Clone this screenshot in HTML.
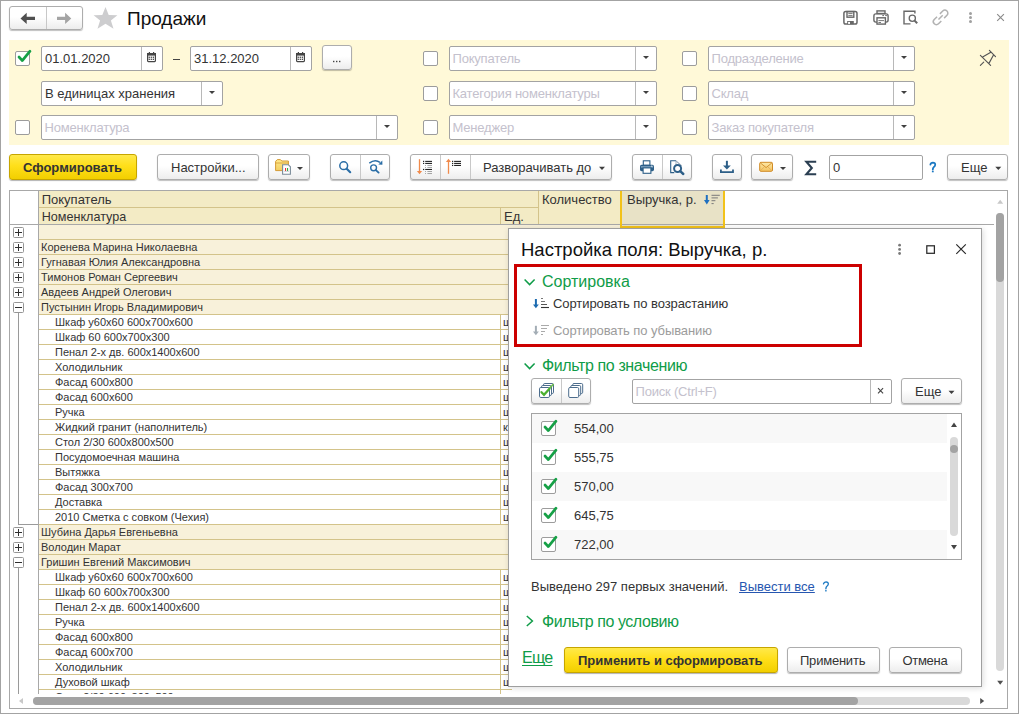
<!DOCTYPE html><html><head><meta charset="utf-8"><style>
*{box-sizing:border-box;}
html,body{margin:0;padding:0;}
body{width:1019px;height:714px;position:relative;overflow:hidden;background:#fff;font-family:"Liberation Sans", sans-serif;}
.a{position:absolute;}
.t{position:absolute;white-space:nowrap;line-height:normal;}
</style></head><body>
<div class="a" style="left:0px;top:0px;width:1019px;height:714px;border:1px solid #a3a3a3;"></div>
<div class="a" style="left:9px;top:6px;width:74px;height:24px;border:1px solid #adadad;border-radius:3px;background:linear-gradient(#ffffff 0%,#ffffff 45%,#ededed 100%);box-shadow:0 1px 1px rgba(0,0,0,0.25);"></div>
<div class="a" style="left:46px;top:7px;width:1px;height:22px;background:#c8c8c8;"></div>
<svg class="a" style="left:18px;top:10px;" width="20" height="17" viewBox="18 10 20 17"><path d="M20.5 18.4 L26.7 12.8 L26.7 16.8 L35 16.8 L35 20 L26.7 20 L26.7 24 Z" fill="#505050"/></svg>
<svg class="a" style="left:55px;top:10px;" width="20" height="17" viewBox="55 10 20 17"><path d="M71.3 18.4 L65.1 12.8 L65.1 16.8 L57 16.8 L57 20 L65.1 20 L65.1 24 Z" fill="#a4a4a4"/></svg>
<svg class="a" style="left:92px;top:5px;" width="27" height="26" viewBox="92 5 27 26"><path d="M105.5 6.9 L108.7 15 L117.4 15.3 L110.9 20.5 L113.5 28.7 L105.5 23.7 L97.5 28.7 L100.1 20.5 L93.6 15.3 L102.3 15 Z" fill="#cdcdcf"/></svg>
<div class="t" style="left:127px;top:7.80px;font-size:19px;color:#111;font-weight:400;">Продажи</div>
<svg class="a" style="left:840px;top:8px;" width="21" height="19" viewBox="840 8 21 19"><rect x="843.9" y="11.6" width="13.1" height="12.4" rx="1.8" fill="none" stroke="#686868" stroke-width="1.5"/><rect x="847" y="11.6" width="6.8" height="5.6" fill="none" stroke="#686868" stroke-width="1.4"/><path d="M848.3 13.6 H852.6 M848.3 15.6 H852.6" stroke="#686868" stroke-width="0.9"/><rect x="847.2" y="21" width="6.6" height="3.3" fill="#686868"/><rect x="848.1" y="21.9" width="1.9" height="2" fill="#fff"/></svg>
<svg class="a" style="left:871px;top:8px;" width="20" height="19" viewBox="871 8 20 19"><rect x="877" y="10.9" width="8" height="2.6" fill="none" stroke="#686868" stroke-width="1.4"/><rect x="873.9" y="13.9" width="14.2" height="8.2" rx="2" fill="none" stroke="#686868" stroke-width="1.4"/><rect x="877" y="17.8" width="8.4" height="6.3" fill="#fff" stroke="#686868" stroke-width="1.4"/><path d="M878.4 20.6 H884 M878.4 22.5 H881" stroke="#686868" stroke-width="0.9"/><path d="M882.3 15.6 H884 M885.2 15.6 H886.9" stroke="#686868" stroke-width="1"/></svg>
<svg class="a" style="left:901px;top:8px;" width="19" height="19" viewBox="901 8 19 19"><path d="M910.5 23.9 H904 V11.2 H914.9 V13.6" fill="none" stroke="#686868" stroke-width="1.4"/><circle cx="912.3" cy="18.2" r="3.1" fill="none" stroke="#686868" stroke-width="1.3"/><path d="M914.6 20.6 L917.2 23.3" stroke="#686868" stroke-width="2"/></svg>
<svg class="a" style="left:930px;top:7px;" width="21" height="21" viewBox="930 7 21 21"><g transform="rotate(-45 940.6 17.4)"><path d="M938.6 14.4 H934.6 A3 3 0 0 0 934.6 20.4 H938.6" fill="none" stroke="#b2b2b2" stroke-width="1.5"/><path d="M942.6 14.4 H946.6 A3 3 0 0 1 946.6 20.4 H942.6" fill="none" stroke="#b2b2b2" stroke-width="1.5"/><path d="M937.6 17.4 H943.6" stroke="#b2b2b2" stroke-width="1.5"/></g></svg>
<svg class="a" style="left:966px;top:9px;" width="9" height="17" viewBox="966 9 9 17"><circle cx="970.5" cy="13.5" r="1.5" fill="#a0a0a0"/><circle cx="970.5" cy="17.5" r="1.5" fill="#a0a0a0"/><circle cx="970.5" cy="21.5" r="1.5" fill="#a0a0a0"/></svg>
<svg class="a" style="left:995px;top:12px;" width="11" height="11" viewBox="995 12 11 11"><path d="M997.2 14.1 L1003.9 20.9 M1003.9 14.1 L997.2 20.9" stroke="#8a8a8a" stroke-width="1.1"/></svg>
<div class="a" style="left:9px;top:40px;width:1000px;height:105px;background:#fff9d8;"></div>
<div class="a" style="left:15px;top:51px;width:15px;height:15px;border:1px solid #9c9c9c;border-radius:2px;background:#fff;"></div>
<svg class="a" style="left:15px;top:46px;" width="18" height="18" viewBox="15 46 18 18"><path d="M19 57 L22.3 60.6 L30 51.2" fill="none" stroke="#16a046" stroke-width="2.7" stroke-linecap="round" stroke-linejoin="round"/></svg>
<div class="a" style="left:41px;top:46px;width:122px;height:25px;border:1px solid #a3a3a3;border-radius:2px;background:#fff;"></div>
<div class="a" style="left:141px;top:47px;width:1px;height:23px;background:#b8b8b8;"></div>
<svg class="a" style="left:146px;top:51px;" width="12" height="12" viewBox="146 51 12 12"><rect x="147.6" y="53.6" width="7.8" height="8" rx="0.8" fill="#fff" stroke="#454545" stroke-width="1.2"/><rect x="147" y="53" width="9" height="2.6" fill="#454545"/><rect x="148.8" y="52" width="1.2" height="1.6" fill="#454545"/><rect x="153" y="52" width="1.2" height="1.6" fill="#454545"/><rect x="148.6" y="56.6" width="1.3" height="1.3" fill="#454545"/><rect x="148.6" y="58.65" width="1.3" height="1.3" fill="#454545"/><rect x="150.65" y="56.6" width="1.3" height="1.3" fill="#454545"/><rect x="150.65" y="58.65" width="1.3" height="1.3" fill="#454545"/><rect x="152.7" y="56.6" width="1.3" height="1.3" fill="#454545"/><rect x="152.7" y="58.65" width="1.3" height="1.3" fill="#454545"/></svg>
<div class="t" style="left:45px;top:51.23px;font-size:13px;color:#333;font-weight:400;">01.01.2020</div>
<div class="a" style="left:173px;top:59px;width:7px;height:1px;background:#444;"></div>
<div class="a" style="left:190px;top:46px;width:122px;height:25px;border:1px solid #a3a3a3;border-radius:2px;background:#fff;"></div>
<div class="a" style="left:290px;top:47px;width:1px;height:23px;background:#b8b8b8;"></div>
<svg class="a" style="left:295px;top:51px;" width="12" height="12" viewBox="295 51 12 12"><rect x="296.6" y="53.6" width="7.8" height="8" rx="0.8" fill="#fff" stroke="#454545" stroke-width="1.2"/><rect x="296" y="53" width="9" height="2.6" fill="#454545"/><rect x="297.8" y="52" width="1.2" height="1.6" fill="#454545"/><rect x="302" y="52" width="1.2" height="1.6" fill="#454545"/><rect x="297.6" y="56.6" width="1.3" height="1.3" fill="#454545"/><rect x="297.6" y="58.65" width="1.3" height="1.3" fill="#454545"/><rect x="299.65000000000003" y="56.6" width="1.3" height="1.3" fill="#454545"/><rect x="299.65000000000003" y="58.65" width="1.3" height="1.3" fill="#454545"/><rect x="301.70000000000005" y="56.6" width="1.3" height="1.3" fill="#454545"/><rect x="301.70000000000005" y="58.65" width="1.3" height="1.3" fill="#454545"/></svg>
<div class="t" style="left:194px;top:51.23px;font-size:13px;color:#333;font-weight:400;">31.12.2020</div>
<div class="a" style="left:322px;top:45px;width:30px;height:25px;border:1px solid #adadad;border-radius:3px;background:linear-gradient(#ffffff 0%,#ffffff 45%,#ededed 100%);box-shadow:0 1px 1px rgba(0,0,0,0.25);"></div>
<svg class="a" style="left:330px;top:58px;" width="14" height="7" viewBox="330 58 14 7"><rect x="333" y="60.8" width="1.4" height="1.4" fill="#444"/><rect x="336" y="60.8" width="1.4" height="1.4" fill="#444"/><rect x="339" y="60.8" width="1.4" height="1.4" fill="#444"/></svg>
<div class="a" style="left:41px;top:81px;width:182px;height:25px;border:1px solid #a3a3a3;border-radius:2px;background:#fff;"></div>
<div class="a" style="left:201px;top:82px;width:1px;height:23px;background:#b8b8b8;"></div>
<svg class="a" style="left:206px;top:88px;" width="13" height="9" viewBox="206 88 13 9"><path d="M209.0 90.9 L215.0 90.9 L212.0 94.1 Z" fill="#3f3f3f"/></svg>
<div class="t" style="left:45px;top:86.23px;font-size:13px;color:#333;font-weight:400;">В единицах хранения</div>
<div class="a" style="left:15px;top:120px;width:15px;height:15px;border:1px solid #9c9c9c;border-radius:2px;background:#fff;"></div>
<div class="a" style="left:41px;top:115px;width:357px;height:25px;border:1px solid #a3a3a3;border-radius:2px;background:#fff;"></div>
<div class="a" style="left:376px;top:116px;width:1px;height:23px;background:#b8b8b8;"></div>
<svg class="a" style="left:381px;top:122px;" width="13" height="9" viewBox="381 122 13 9"><path d="M384.0 124.9 L390.0 124.9 L387.0 128.1 Z" fill="#3f3f3f"/></svg>
<div class="t" style="left:44.5px;top:120.23px;font-size:13px;color:#c4c1cd;font-weight:400;letter-spacing:-0.2px;">Номенклатура</div>
<div class="a" style="left:423px;top:51px;width:15px;height:15px;border:1px solid #9c9c9c;border-radius:2px;background:#fff;"></div>
<div class="a" style="left:449px;top:46px;width:208px;height:25px;border:1px solid #a3a3a3;border-radius:2px;background:#fff;"></div>
<div class="a" style="left:635px;top:47px;width:1px;height:23px;background:#b8b8b8;"></div>
<svg class="a" style="left:640px;top:53px;" width="13" height="9" viewBox="640 53 13 9"><path d="M643.0 55.9 L649.0 55.9 L646.0 59.1 Z" fill="#3f3f3f"/></svg>
<div class="t" style="left:452.5px;top:51.23px;font-size:13px;color:#c4c1cd;font-weight:400;letter-spacing:-0.2px;">Покупатель</div>
<div class="a" style="left:682px;top:51px;width:15px;height:15px;border:1px solid #9c9c9c;border-radius:2px;background:#fff;"></div>
<div class="a" style="left:708px;top:46px;width:207px;height:25px;border:1px solid #a3a3a3;border-radius:2px;background:#fff;"></div>
<div class="a" style="left:893px;top:47px;width:1px;height:23px;background:#b8b8b8;"></div>
<svg class="a" style="left:898px;top:53px;" width="13" height="9" viewBox="898 53 13 9"><path d="M901.0 55.9 L907.0 55.9 L904.0 59.1 Z" fill="#3f3f3f"/></svg>
<div class="t" style="left:711.5px;top:51.23px;font-size:13px;color:#c4c1cd;font-weight:400;letter-spacing:-0.2px;">Подразделение</div>
<div class="a" style="left:423px;top:86px;width:15px;height:15px;border:1px solid #9c9c9c;border-radius:2px;background:#fff;"></div>
<div class="a" style="left:449px;top:81px;width:208px;height:25px;border:1px solid #a3a3a3;border-radius:2px;background:#fff;"></div>
<div class="a" style="left:635px;top:82px;width:1px;height:23px;background:#b8b8b8;"></div>
<svg class="a" style="left:640px;top:88px;" width="13" height="9" viewBox="640 88 13 9"><path d="M643.0 90.9 L649.0 90.9 L646.0 94.1 Z" fill="#3f3f3f"/></svg>
<div class="t" style="left:452.5px;top:86.23px;font-size:13px;color:#c4c1cd;font-weight:400;letter-spacing:-0.2px;">Категория номенклатуры</div>
<div class="a" style="left:682px;top:86px;width:15px;height:15px;border:1px solid #9c9c9c;border-radius:2px;background:#fff;"></div>
<div class="a" style="left:708px;top:81px;width:207px;height:25px;border:1px solid #a3a3a3;border-radius:2px;background:#fff;"></div>
<div class="a" style="left:893px;top:82px;width:1px;height:23px;background:#b8b8b8;"></div>
<svg class="a" style="left:898px;top:88px;" width="13" height="9" viewBox="898 88 13 9"><path d="M901.0 90.9 L907.0 90.9 L904.0 94.1 Z" fill="#3f3f3f"/></svg>
<div class="t" style="left:711.5px;top:86.23px;font-size:13px;color:#c4c1cd;font-weight:400;letter-spacing:-0.2px;">Склад</div>
<div class="a" style="left:423px;top:120px;width:15px;height:15px;border:1px solid #9c9c9c;border-radius:2px;background:#fff;"></div>
<div class="a" style="left:449px;top:115px;width:208px;height:25px;border:1px solid #a3a3a3;border-radius:2px;background:#fff;"></div>
<div class="a" style="left:635px;top:116px;width:1px;height:23px;background:#b8b8b8;"></div>
<svg class="a" style="left:640px;top:122px;" width="13" height="9" viewBox="640 122 13 9"><path d="M643.0 124.9 L649.0 124.9 L646.0 128.1 Z" fill="#3f3f3f"/></svg>
<div class="t" style="left:452.5px;top:120.23px;font-size:13px;color:#c4c1cd;font-weight:400;letter-spacing:-0.2px;">Менеджер</div>
<div class="a" style="left:682px;top:120px;width:15px;height:15px;border:1px solid #9c9c9c;border-radius:2px;background:#fff;"></div>
<div class="a" style="left:708px;top:115px;width:207px;height:25px;border:1px solid #a3a3a3;border-radius:2px;background:#fff;"></div>
<div class="a" style="left:893px;top:116px;width:1px;height:23px;background:#b8b8b8;"></div>
<svg class="a" style="left:898px;top:122px;" width="13" height="9" viewBox="898 122 13 9"><path d="M901.0 124.9 L907.0 124.9 L904.0 128.1 Z" fill="#3f3f3f"/></svg>
<div class="t" style="left:711.5px;top:120.23px;font-size:13px;color:#c4c1cd;font-weight:400;letter-spacing:-0.2px;">Заказ покупателя</div>
<svg class="a" style="left:977px;top:47px;" width="22" height="22" viewBox="977 47 22 22"><path d="M980.4 55.4 L990.6 65.4 M989.4 50.3 L995.5 56.6 M982.6 56.9 L990.4 52.4 M988.8 63.6 L993.5 55 M980.4 65.4 L983.7 62.2" stroke="#555" stroke-width="1.15" stroke-linecap="round"/></svg>
<div class="a" style="left:9px;top:154px;width:128px;height:26px;border:1px solid #c6a500;border-radius:3px;background:linear-gradient(#ffe94a 0%,#ffdf1a 45%,#f2cf00 100%);box-shadow:0 1px 1px rgba(0,0,0,0.3);"></div>
<div class="t" style="left:23px;top:160.24px;font-size:13px;color:#333;font-weight:700;">Сформировать</div>
<div class="a" style="left:157px;top:154px;width:102px;height:26px;border:1px solid #adadad;border-radius:3px;background:linear-gradient(#ffffff 0%,#ffffff 45%,#ededed 100%);box-shadow:0 1px 1px rgba(0,0,0,0.25);"></div>
<div class="t" style="left:171px;top:160.24px;font-size:13px;color:#333;font-weight:400;">Настройки...</div>
<div class="a" style="left:268px;top:154px;width:42px;height:26px;border:1px solid #adadad;border-radius:3px;background:linear-gradient(#ffffff 0%,#ffffff 45%,#ededed 100%);box-shadow:0 1px 1px rgba(0,0,0,0.25);"></div>
<svg class="a" style="left:272px;top:156px;" width="22" height="22" viewBox="272 156 22 22"><defs><linearGradient id="fg" x1="0" y1="0" x2="0" y2="1"><stop offset="0" stop-color="#ffe98a"/><stop offset="1" stop-color="#f3cf62"/></linearGradient></defs><path d="M275.6 170.6 V161.3 L277.3 159.6 H280.4 L281.8 161 H288.4 V170.6 Z" fill="url(#fg)" stroke="#d49a35" stroke-width="1"/><path d="M275.6 163 H288.4" stroke="#d49a35" stroke-width="0.8"/><path d="M282.6 164.7 H288.3 L290.4 166.8 V174.2 H282.6 Z" fill="#fff" stroke="#7b8c9a" stroke-width="1.1"/><rect x="285" y="168" width="1.1" height="3" fill="#ee3030"/><rect x="287" y="168" width="1.1" height="3" fill="#30b040"/><path d="M284.2 171.3 H289" stroke="#8a9aaa" stroke-width="0.5"/></svg>
<svg class="a" style="left:294px;top:164px;" width="13" height="9" viewBox="294 164 13 9"><path d="M297.0 166.9 L303.0 166.9 L300 170.1 Z" fill="#3f3f3f"/></svg>
<div class="a" style="left:330px;top:154px;width:60px;height:26px;border:1px solid #adadad;border-radius:3px;background:linear-gradient(#ffffff 0%,#ffffff 45%,#ededed 100%);box-shadow:0 1px 1px rgba(0,0,0,0.25);"></div>
<div class="a" style="left:360px;top:155px;width:1px;height:24px;background:#c8c8c8;"></div>
<svg class="a" style="left:336px;top:158px;" width="18" height="18" viewBox="336 158 18 18"><circle cx="343.7" cy="165.7" r="3.9" fill="none" stroke="#2b6ea6" stroke-width="1.5"/><path d="M346.7 168.7 L350.2 172.2" stroke="#2b6ea6" stroke-width="2.1" stroke-linecap="round"/></svg>
<svg class="a" style="left:366px;top:157px;" width="20" height="19" viewBox="366 157 20 19"><path d="M369.3 163.2 Q375 158.6 380 162.4" fill="none" stroke="#2b6ea6" stroke-width="1.5"/><path d="M378.4 164.4 L382.3 160.4 L382.4 164.7 Z" fill="#2b6ea6"/><circle cx="373.6" cy="167.8" r="2.9" fill="none" stroke="#2b6ea6" stroke-width="1.4"/><path d="M375.9 170.1 L378.6 172.6" stroke="#2b6ea6" stroke-width="1.9" stroke-linecap="round"/></svg>
<div class="a" style="left:410px;top:154px;width:202px;height:26px;border:1px solid #adadad;border-radius:3px;background:linear-gradient(#ffffff 0%,#ffffff 45%,#ededed 100%);box-shadow:0 1px 1px rgba(0,0,0,0.25);"></div>
<div class="a" style="left:440px;top:155px;width:1px;height:24px;background:#c8c8c8;"></div>
<div class="a" style="left:470px;top:155px;width:1px;height:24px;background:#c8c8c8;"></div>
<svg class="a" style="left:414px;top:157px;" width="20" height="20" viewBox="414 157 20 20"><path d="M419.5 159.2 V171.5" stroke="#f08a4b" stroke-width="1.3"/><path d="M416.9 171 L422.1 171 L419.5 174.2 Z" fill="#f08a4b"/><rect x="423" y="160.80" width="1.2" height="1.2" fill="#222"/><path d="M425.2 161.40 H432" stroke="#222" stroke-width="1.1"/><rect x="423" y="162.82" width="1.2" height="1.2" fill="#222"/><path d="M425.2 163.42 H432" stroke="#222" stroke-width="1.1"/><rect x="425.1" y="164.99" width="0.9" height="0.9" fill="#999"/><path d="M427.4 165.44 H432" stroke="#9a9a9a" stroke-width="0.9"/><rect x="425.1" y="167.01" width="0.9" height="0.9" fill="#999"/><path d="M427.4 167.46 H432" stroke="#9a9a9a" stroke-width="0.9"/><rect x="423" y="168.88" width="1.2" height="1.2" fill="#222"/><path d="M425.2 169.48 H432" stroke="#222" stroke-width="1.1"/><rect x="425.1" y="171.05" width="0.9" height="0.9" fill="#999"/><path d="M427.4 171.50 H432" stroke="#9a9a9a" stroke-width="0.9"/><rect x="425.1" y="173.07" width="0.9" height="0.9" fill="#999"/><path d="M427.4 173.52 H432" stroke="#9a9a9a" stroke-width="0.9"/></svg>
<svg class="a" style="left:444px;top:157px;" width="20" height="20" viewBox="444 157 20 20"><path d="M448.5 161.5 V173.8" stroke="#f08a4b" stroke-width="1.3"/><path d="M445.9 162 L451.1 162 L448.5 158.8 Z" fill="#f08a4b"/><rect x="452" y="160.80" width="1.2" height="1.2" fill="#222"/><path d="M454.1 161.40 H461" stroke="#222" stroke-width="1.1"/><rect x="452" y="162.82" width="1.2" height="1.2" fill="#222"/><path d="M454.1 163.42 H461" stroke="#222" stroke-width="1.1"/><rect x="452" y="164.84" width="1.2" height="1.2" fill="#222"/><path d="M454.1 165.44 H461" stroke="#222" stroke-width="1.1"/></svg>
<div class="t" style="left:483px;top:160.24px;font-size:13px;color:#333;font-weight:400;">Разворачивать до</div>
<svg class="a" style="left:596px;top:164px;" width="13" height="9" viewBox="596 164 13 9"><path d="M599.0 166.70000000000002 L605.0 166.70000000000002 L602 169.9 Z" fill="#3f3f3f"/></svg>
<div class="a" style="left:632px;top:154px;width:60px;height:26px;border:1px solid #adadad;border-radius:3px;background:linear-gradient(#ffffff 0%,#ffffff 45%,#ededed 100%);box-shadow:0 1px 1px rgba(0,0,0,0.25);"></div>
<div class="a" style="left:662px;top:155px;width:1px;height:24px;background:#c8c8c8;"></div>
<svg class="a" style="left:638px;top:157px;" width="19" height="20" viewBox="638 157 19 20"><rect x="643.3" y="160.8" width="6.6" height="4.5" fill="#fff" stroke="#2d5f88" stroke-width="1.1"/><rect x="640" y="164.8" width="14" height="6.4" rx="1.6" fill="#2d5f88"/><rect x="641" y="166.3" width="12" height="1.2" fill="#8fb0cc"/><rect x="643.1" y="167.9" width="7.8" height="5.4" fill="#fff" stroke="#2d5f88" stroke-width="1.1"/><rect x="651.2" y="165.6" width="1.2" height="1" fill="#fff"/></svg>
<svg class="a" style="left:667px;top:157px;" width="20" height="20" viewBox="667 157 20 20"><path d="M676 160.8 H670.7 V172.6 H674.3" fill="none" stroke="#2d5f88" stroke-width="1.1"/><path d="M676 160.8 L681.2 165.5 V166" fill="none" stroke="#9ab" stroke-width="1.1"/><path d="M676 160.8 V165.5 H681.2" fill="none" stroke="#9ab" stroke-width="0.9"/><circle cx="677.6" cy="168.5" r="3.5" fill="#fff" stroke="#2d5f88" stroke-width="2"/><path d="M680.2 171.1 L683.3 174" stroke="#2d5f88" stroke-width="2.4" stroke-linecap="round"/></svg>
<div class="a" style="left:712px;top:154px;width:30px;height:26px;border:1px solid #adadad;border-radius:3px;background:linear-gradient(#ffffff 0%,#ffffff 45%,#ededed 100%);box-shadow:0 1px 1px rgba(0,0,0,0.25);"></div>
<svg class="a" style="left:717px;top:157px;" width="20" height="20" viewBox="717 157 20 20"><path d="M726.9 160.8 V166.5" stroke="#2d5f88" stroke-width="2"/><path d="M723 165.5 L726.9 169.6 L730.8 165.5 Z" fill="#2d5f88"/><path d="M720.9 169.6 V172.2 H733 V169.6" fill="none" stroke="#2d5f88" stroke-width="1.8"/></svg>
<div class="a" style="left:751px;top:154px;width:42px;height:26px;border:1px solid #adadad;border-radius:3px;background:linear-gradient(#ffffff 0%,#ffffff 45%,#ededed 100%);box-shadow:0 1px 1px rgba(0,0,0,0.25);"></div>
<svg class="a" style="left:757px;top:159px;" width="19" height="15" viewBox="757 159 19 15"><defs><linearGradient id="mg" x1="0" y1="0" x2="0" y2="1"><stop offset="0" stop-color="#fde9a8"/><stop offset="1" stop-color="#f4c25e"/></linearGradient></defs><rect x="759.7" y="162.3" width="12.8" height="9" rx="1.2" fill="url(#mg)" stroke="#d08a25" stroke-width="1"/><path d="M760.2 162.8 L766.1 167.6 L772 162.8" fill="none" stroke="#d08a25" stroke-width="0.9"/><path d="M760.2 170.8 L764.2 167 M772 170.8 L768 167" fill="none" stroke="#e0a850" stroke-width="0.7"/></svg>
<svg class="a" style="left:777px;top:164px;" width="13" height="9" viewBox="777 164 13 9"><path d="M780.0 166.9 L786.0 166.9 L783 170.1 Z" fill="#3f3f3f"/></svg>
<svg class="a" style="left:802px;top:158px;" width="17" height="20" viewBox="802 158 17 20"><path d="M816.2 161.8 H806.4 L811.8 168 L806.4 174.2 H816.2" fill="none" stroke="#2b3f52" stroke-width="2.1" stroke-linejoin="miter"/></svg>
<div class="a" style="left:829px;top:155px;width:94px;height:25px;border:1px solid #a3a3a3;border-radius:2px;background:#fff;"></div>
<div class="t" style="left:833px;top:160.24px;font-size:13px;color:#333;font-weight:400;">0</div>
<svg class="a" style="left:928px;top:160px;" width="10" height="13" viewBox="928 160 10 13"><path d="M930.4 164.70000000000002 Q930.8 162.60000000000002 932.9 162.60000000000002 Q935.3 162.70000000000002 935.2 164.8 Q935.1 166.20000000000002 933.8 167.10000000000002 Q932.8 167.9 932.8 169.5" fill="none" stroke="#1a78c2" stroke-width="1.8" stroke-linecap="round"/><rect x="931.9" y="170.8" width="1.8" height="1.5" fill="#1a78c2"/></svg>
<div class="a" style="left:947px;top:154px;width:61px;height:26px;border:1px solid #adadad;border-radius:3px;background:linear-gradient(#ffffff 0%,#ffffff 45%,#ededed 100%);box-shadow:0 1px 1px rgba(0,0,0,0.25);"></div>
<div class="t" style="left:961px;top:160.24px;font-size:13px;color:#333;font-weight:400;">Еще</div>
<svg class="a" style="left:992px;top:164px;" width="13" height="9" viewBox="992 164 13 9"><path d="M995.3 166.8 L1001.3 166.8 L998.3 170.0 Z" fill="#3f3f3f"/></svg>
<div class="a" style="left:9px;top:190px;width:999px;height:519px;border:1px solid #a8a8a8;background:#fff;"></div>
<div class="a" style="left:39px;top:191px;width:581px;height:33px;background:#f3ebc5;"></div>
<div class="a" style="left:620px;top:191px;width:105px;height:33px;background:#e8e2c6;"></div>
<div class="a" style="left:39px;top:207px;width:499px;height:1px;#d3c38a"></div>
<div class="a" style="left:500px;top:208px;width:1px;height:16px;background:#d3c38a;"></div>
<div class="a" style="left:538px;top:191px;width:1px;height:33px;background:#d3c38a;"></div>
<div class="a" style="left:39px;top:207px;width:499px;height:1px;background:#d3c38a;"></div>
<div class="a" style="left:10px;top:224px;width:984px;height:1px;background:#a8a8a8;"></div>
<div class="a" style="left:38px;top:191px;width:1px;height:503px;background:#a8a8a8;"></div>
<div class="t" style="left:41.7px;top:192.24px;font-size:13px;color:#333;font-weight:400;">Покупатель</div>
<div class="t" style="left:41.7px;top:209.60px;font-size:12.6px;color:#333;font-weight:400;">Номенклатура</div>
<div class="t" style="left:504px;top:209.24px;font-size:13px;color:#333;font-weight:400;">Ед.</div>
<div class="t" style="left:542px;top:192.24px;font-size:13px;color:#333;font-weight:400;">Количество</div>
<div class="t" style="left:627px;top:192.24px;font-size:13px;color:#333;font-weight:400;">Выручка, р.</div>
<svg class="a" style="left:702px;top:192px;" width="20" height="15" viewBox="702 192 20 15"><path d="M706.8 195 V201" stroke="#1d6fc0" stroke-width="2"/><path d="M704 200 L706.8 204.6 L709.6 200 Z" fill="#1d6fc0"/><path d="M711.5 195.3 H719.8 M711.5 197.9 H717.9 M711.5 200.7 H715.4 M711.5 203.6 H713.7" stroke="#7a7a7a" stroke-width="1"/></svg>
<div class="a" style="left:10px;top:225px;width:998px;height:469px;overflow:hidden;">
<div class="a" style="left:29px;top:0px;width:686px;height:15px;background:#f8f1da;"></div>
<div class="a" style="left:29px;top:14px;width:686px;height:1px;background:#d3c38a;"></div>
<div class="t" style="left:31px;top:1.04px;font-size:11px;color:#333;font-weight:400;"></div>
<div class="a" style="left:3px;top:2px;width:11px;height:11px;border:1px solid #959595;border-radius:1.5px;background:#fff;"></div>
<div class="a" style="left:5px;top:7px;width:7px;height:1px;background:#2e2e2e;"></div>
<div class="a" style="left:8px;top:4px;width:1px;height:7px;background:#2e2e2e;"></div>
<div class="a" style="left:29px;top:15px;width:686px;height:15px;background:#f8f1da;"></div>
<div class="a" style="left:29px;top:29px;width:686px;height:1px;background:#d3c38a;"></div>
<div class="t" style="left:31px;top:16.05px;font-size:11px;color:#333;font-weight:400;">Коренева Марина Николаевна</div>
<div class="a" style="left:3px;top:17px;width:11px;height:11px;border:1px solid #959595;border-radius:1.5px;background:#fff;"></div>
<div class="a" style="left:5px;top:22px;width:7px;height:1px;background:#2e2e2e;"></div>
<div class="a" style="left:8px;top:19px;width:1px;height:7px;background:#2e2e2e;"></div>
<div class="a" style="left:29px;top:30px;width:686px;height:15px;background:#f8f1da;"></div>
<div class="a" style="left:29px;top:44px;width:686px;height:1px;background:#d3c38a;"></div>
<div class="t" style="left:31px;top:31.05px;font-size:11px;color:#333;font-weight:400;">Гугнавая Юлия Александровна</div>
<div class="a" style="left:3px;top:32px;width:11px;height:11px;border:1px solid #959595;border-radius:1.5px;background:#fff;"></div>
<div class="a" style="left:5px;top:37px;width:7px;height:1px;background:#2e2e2e;"></div>
<div class="a" style="left:8px;top:34px;width:1px;height:7px;background:#2e2e2e;"></div>
<div class="a" style="left:29px;top:45px;width:686px;height:15px;background:#f8f1da;"></div>
<div class="a" style="left:29px;top:59px;width:686px;height:1px;background:#d3c38a;"></div>
<div class="t" style="left:31px;top:46.05px;font-size:11px;color:#333;font-weight:400;">Тимонов Роман Сергеевич</div>
<div class="a" style="left:3px;top:47px;width:11px;height:11px;border:1px solid #959595;border-radius:1.5px;background:#fff;"></div>
<div class="a" style="left:5px;top:52px;width:7px;height:1px;background:#2e2e2e;"></div>
<div class="a" style="left:8px;top:49px;width:1px;height:7px;background:#2e2e2e;"></div>
<div class="a" style="left:29px;top:60px;width:686px;height:15px;background:#f8f1da;"></div>
<div class="a" style="left:29px;top:74px;width:686px;height:1px;background:#d3c38a;"></div>
<div class="t" style="left:31px;top:61.05px;font-size:11px;color:#333;font-weight:400;">Авдеев Андрей Олегович</div>
<div class="a" style="left:3px;top:62px;width:11px;height:11px;border:1px solid #959595;border-radius:1.5px;background:#fff;"></div>
<div class="a" style="left:5px;top:67px;width:7px;height:1px;background:#2e2e2e;"></div>
<div class="a" style="left:8px;top:64px;width:1px;height:7px;background:#2e2e2e;"></div>
<div class="a" style="left:29px;top:75px;width:686px;height:15px;background:#f8f1da;"></div>
<div class="a" style="left:29px;top:89px;width:686px;height:1px;background:#d3c38a;"></div>
<div class="t" style="left:31px;top:76.05px;font-size:11px;color:#333;font-weight:400;">Пустынин Игорь Владимирович</div>
<div class="a" style="left:3px;top:77px;width:11px;height:11px;border:1px solid #959595;border-radius:1.5px;background:#fff;"></div>
<div class="a" style="left:5px;top:82px;width:7px;height:1px;background:#2e2e2e;"></div>
<div class="a" style="left:8px;top:88px;width:1px;height:2px;background:#9a9a9a;"></div>
<div class="a" style="left:29px;top:104px;width:686px;height:1px;background:#d3c38a;"></div>
<div class="a" style="left:490px;top:90px;width:1px;height:14px;background:#d3c38a;"></div>
<div class="t" style="left:45px;top:91.05px;font-size:11px;color:#333;font-weight:400;">Шкаф у60х60 600х700х600</div>
<div class="t" style="left:493px;top:91.05px;font-size:11px;color:#333;font-weight:400;">ш</div>
<div class="a" style="left:8px;top:90px;width:1px;height:15px;background:#9a9a9a;"></div>
<div class="a" style="left:29px;top:119px;width:686px;height:1px;background:#d3c38a;"></div>
<div class="a" style="left:490px;top:105px;width:1px;height:14px;background:#d3c38a;"></div>
<div class="t" style="left:45px;top:106.05px;font-size:11px;color:#333;font-weight:400;">Шкаф 60 600х700х300</div>
<div class="t" style="left:493px;top:106.05px;font-size:11px;color:#333;font-weight:400;">ш</div>
<div class="a" style="left:8px;top:105px;width:1px;height:15px;background:#9a9a9a;"></div>
<div class="a" style="left:29px;top:134px;width:686px;height:1px;background:#d3c38a;"></div>
<div class="a" style="left:490px;top:120px;width:1px;height:14px;background:#d3c38a;"></div>
<div class="t" style="left:45px;top:121.05px;font-size:11px;color:#333;font-weight:400;">Пенал 2-х дв. 600х1400х600</div>
<div class="t" style="left:493px;top:121.05px;font-size:11px;color:#333;font-weight:400;">ш</div>
<div class="a" style="left:8px;top:120px;width:1px;height:15px;background:#9a9a9a;"></div>
<div class="a" style="left:29px;top:149px;width:686px;height:1px;background:#d3c38a;"></div>
<div class="a" style="left:490px;top:135px;width:1px;height:14px;background:#d3c38a;"></div>
<div class="t" style="left:45px;top:136.04px;font-size:11px;color:#333;font-weight:400;">Холодильник</div>
<div class="t" style="left:493px;top:136.04px;font-size:11px;color:#333;font-weight:400;">ш</div>
<div class="a" style="left:8px;top:135px;width:1px;height:15px;background:#9a9a9a;"></div>
<div class="a" style="left:29px;top:164px;width:686px;height:1px;background:#d3c38a;"></div>
<div class="a" style="left:490px;top:150px;width:1px;height:14px;background:#d3c38a;"></div>
<div class="t" style="left:45px;top:151.04px;font-size:11px;color:#333;font-weight:400;">Фасад 600х800</div>
<div class="t" style="left:493px;top:151.04px;font-size:11px;color:#333;font-weight:400;">ш</div>
<div class="a" style="left:8px;top:150px;width:1px;height:15px;background:#9a9a9a;"></div>
<div class="a" style="left:29px;top:179px;width:686px;height:1px;background:#d3c38a;"></div>
<div class="a" style="left:490px;top:165px;width:1px;height:14px;background:#d3c38a;"></div>
<div class="t" style="left:45px;top:166.04px;font-size:11px;color:#333;font-weight:400;">Фасад 600х600</div>
<div class="t" style="left:493px;top:166.04px;font-size:11px;color:#333;font-weight:400;">ш</div>
<div class="a" style="left:8px;top:165px;width:1px;height:15px;background:#9a9a9a;"></div>
<div class="a" style="left:29px;top:194px;width:686px;height:1px;background:#d3c38a;"></div>
<div class="a" style="left:490px;top:180px;width:1px;height:14px;background:#d3c38a;"></div>
<div class="t" style="left:45px;top:181.04px;font-size:11px;color:#333;font-weight:400;">Ручка</div>
<div class="t" style="left:493px;top:181.04px;font-size:11px;color:#333;font-weight:400;">ш</div>
<div class="a" style="left:8px;top:180px;width:1px;height:15px;background:#9a9a9a;"></div>
<div class="a" style="left:29px;top:209px;width:686px;height:1px;background:#d3c38a;"></div>
<div class="a" style="left:490px;top:195px;width:1px;height:14px;background:#d3c38a;"></div>
<div class="t" style="left:45px;top:196.04px;font-size:11px;color:#333;font-weight:400;">Жидкий гранит (наполнитель)</div>
<div class="t" style="left:493px;top:196.04px;font-size:11px;color:#333;font-weight:400;">к</div>
<div class="a" style="left:8px;top:195px;width:1px;height:15px;background:#9a9a9a;"></div>
<div class="a" style="left:29px;top:224px;width:686px;height:1px;background:#d3c38a;"></div>
<div class="a" style="left:490px;top:210px;width:1px;height:14px;background:#d3c38a;"></div>
<div class="t" style="left:45px;top:211.04px;font-size:11px;color:#333;font-weight:400;">Стол 2/30 600х800х500</div>
<div class="t" style="left:493px;top:211.04px;font-size:11px;color:#333;font-weight:400;">ш</div>
<div class="a" style="left:8px;top:210px;width:1px;height:15px;background:#9a9a9a;"></div>
<div class="a" style="left:29px;top:239px;width:686px;height:1px;background:#d3c38a;"></div>
<div class="a" style="left:490px;top:225px;width:1px;height:14px;background:#d3c38a;"></div>
<div class="t" style="left:45px;top:226.04px;font-size:11px;color:#333;font-weight:400;">Посудомоечная машина</div>
<div class="t" style="left:493px;top:226.04px;font-size:11px;color:#333;font-weight:400;">ш</div>
<div class="a" style="left:8px;top:225px;width:1px;height:15px;background:#9a9a9a;"></div>
<div class="a" style="left:29px;top:254px;width:686px;height:1px;background:#d3c38a;"></div>
<div class="a" style="left:490px;top:240px;width:1px;height:14px;background:#d3c38a;"></div>
<div class="t" style="left:45px;top:241.04px;font-size:11px;color:#333;font-weight:400;">Вытяжка</div>
<div class="t" style="left:493px;top:241.04px;font-size:11px;color:#333;font-weight:400;">ш</div>
<div class="a" style="left:8px;top:240px;width:1px;height:15px;background:#9a9a9a;"></div>
<div class="a" style="left:29px;top:269px;width:686px;height:1px;background:#d3c38a;"></div>
<div class="a" style="left:490px;top:255px;width:1px;height:14px;background:#d3c38a;"></div>
<div class="t" style="left:45px;top:256.05px;font-size:11px;color:#333;font-weight:400;">Фасад 300х700</div>
<div class="t" style="left:493px;top:256.05px;font-size:11px;color:#333;font-weight:400;">ш</div>
<div class="a" style="left:8px;top:255px;width:1px;height:15px;background:#9a9a9a;"></div>
<div class="a" style="left:29px;top:284px;width:686px;height:1px;background:#d3c38a;"></div>
<div class="a" style="left:490px;top:270px;width:1px;height:14px;background:#d3c38a;"></div>
<div class="t" style="left:45px;top:271.05px;font-size:11px;color:#333;font-weight:400;">Доставка</div>
<div class="t" style="left:493px;top:271.05px;font-size:11px;color:#333;font-weight:400;">ш</div>
<div class="a" style="left:8px;top:270px;width:1px;height:15px;background:#9a9a9a;"></div>
<div class="a" style="left:29px;top:299px;width:686px;height:1px;background:#d3c38a;"></div>
<div class="a" style="left:490px;top:285px;width:1px;height:14px;background:#d3c38a;"></div>
<div class="t" style="left:45px;top:286.05px;font-size:11px;color:#333;font-weight:400;">2010 Сметка с совком (Чехия)</div>
<div class="t" style="left:493px;top:286.05px;font-size:11px;color:#333;font-weight:400;">ш</div>
<div class="a" style="left:8px;top:285px;width:1px;height:15px;background:#9a9a9a;"></div>
<div class="a" style="left:8px;top:299px;width:20px;height:1px;background:#9a9a9a;"></div>
<div class="a" style="left:29px;top:300px;width:686px;height:15px;background:#f8f1da;"></div>
<div class="a" style="left:29px;top:314px;width:686px;height:1px;background:#d3c38a;"></div>
<div class="t" style="left:31px;top:301.05px;font-size:11px;color:#333;font-weight:400;">Шубина Дарья Евгеньевна</div>
<div class="a" style="left:3px;top:302px;width:11px;height:11px;border:1px solid #959595;border-radius:1.5px;background:#fff;"></div>
<div class="a" style="left:5px;top:307px;width:7px;height:1px;background:#2e2e2e;"></div>
<div class="a" style="left:8px;top:304px;width:1px;height:7px;background:#2e2e2e;"></div>
<div class="a" style="left:29px;top:315px;width:686px;height:15px;background:#f8f1da;"></div>
<div class="a" style="left:29px;top:329px;width:686px;height:1px;background:#d3c38a;"></div>
<div class="t" style="left:31px;top:316.05px;font-size:11px;color:#333;font-weight:400;">Володин Марат</div>
<div class="a" style="left:3px;top:317px;width:11px;height:11px;border:1px solid #959595;border-radius:1.5px;background:#fff;"></div>
<div class="a" style="left:5px;top:322px;width:7px;height:1px;background:#2e2e2e;"></div>
<div class="a" style="left:8px;top:319px;width:1px;height:7px;background:#2e2e2e;"></div>
<div class="a" style="left:29px;top:330px;width:686px;height:15px;background:#f8f1da;"></div>
<div class="a" style="left:29px;top:344px;width:686px;height:1px;background:#d3c38a;"></div>
<div class="t" style="left:31px;top:331.05px;font-size:11px;color:#333;font-weight:400;">Гришин Евгений Максимович</div>
<div class="a" style="left:3px;top:332px;width:11px;height:11px;border:1px solid #959595;border-radius:1.5px;background:#fff;"></div>
<div class="a" style="left:5px;top:337px;width:7px;height:1px;background:#2e2e2e;"></div>
<div class="a" style="left:8px;top:343px;width:1px;height:2px;background:#9a9a9a;"></div>
<div class="a" style="left:29px;top:359px;width:686px;height:1px;background:#d3c38a;"></div>
<div class="a" style="left:490px;top:345px;width:1px;height:14px;background:#d3c38a;"></div>
<div class="t" style="left:45px;top:346.05px;font-size:11px;color:#333;font-weight:400;">Шкаф у60х60 600х700х600</div>
<div class="t" style="left:493px;top:346.05px;font-size:11px;color:#333;font-weight:400;">ш</div>
<div class="a" style="left:8px;top:345px;width:1px;height:15px;background:#9a9a9a;"></div>
<div class="a" style="left:29px;top:374px;width:686px;height:1px;background:#d3c38a;"></div>
<div class="a" style="left:490px;top:360px;width:1px;height:14px;background:#d3c38a;"></div>
<div class="t" style="left:45px;top:361.05px;font-size:11px;color:#333;font-weight:400;">Шкаф 60 600х700х300</div>
<div class="t" style="left:493px;top:361.05px;font-size:11px;color:#333;font-weight:400;">ш</div>
<div class="a" style="left:8px;top:360px;width:1px;height:15px;background:#9a9a9a;"></div>
<div class="a" style="left:29px;top:389px;width:686px;height:1px;background:#d3c38a;"></div>
<div class="a" style="left:490px;top:375px;width:1px;height:14px;background:#d3c38a;"></div>
<div class="t" style="left:45px;top:376.05px;font-size:11px;color:#333;font-weight:400;">Пенал 2-х дв. 600х1400х600</div>
<div class="t" style="left:493px;top:376.05px;font-size:11px;color:#333;font-weight:400;">ш</div>
<div class="a" style="left:8px;top:375px;width:1px;height:15px;background:#9a9a9a;"></div>
<div class="a" style="left:29px;top:404px;width:686px;height:1px;background:#d3c38a;"></div>
<div class="a" style="left:490px;top:390px;width:1px;height:14px;background:#d3c38a;"></div>
<div class="t" style="left:45px;top:391.05px;font-size:11px;color:#333;font-weight:400;">Ручка</div>
<div class="t" style="left:493px;top:391.05px;font-size:11px;color:#333;font-weight:400;">ш</div>
<div class="a" style="left:8px;top:390px;width:1px;height:15px;background:#9a9a9a;"></div>
<div class="a" style="left:29px;top:419px;width:686px;height:1px;background:#d3c38a;"></div>
<div class="a" style="left:490px;top:405px;width:1px;height:14px;background:#d3c38a;"></div>
<div class="t" style="left:45px;top:406.05px;font-size:11px;color:#333;font-weight:400;">Фасад 600х800</div>
<div class="t" style="left:493px;top:406.05px;font-size:11px;color:#333;font-weight:400;">ш</div>
<div class="a" style="left:8px;top:405px;width:1px;height:15px;background:#9a9a9a;"></div>
<div class="a" style="left:29px;top:434px;width:686px;height:1px;background:#d3c38a;"></div>
<div class="a" style="left:490px;top:420px;width:1px;height:14px;background:#d3c38a;"></div>
<div class="t" style="left:45px;top:421.05px;font-size:11px;color:#333;font-weight:400;">Фасад 600х700</div>
<div class="t" style="left:493px;top:421.05px;font-size:11px;color:#333;font-weight:400;">ш</div>
<div class="a" style="left:8px;top:420px;width:1px;height:15px;background:#9a9a9a;"></div>
<div class="a" style="left:29px;top:449px;width:686px;height:1px;background:#d3c38a;"></div>
<div class="a" style="left:490px;top:435px;width:1px;height:14px;background:#d3c38a;"></div>
<div class="t" style="left:45px;top:436.05px;font-size:11px;color:#333;font-weight:400;">Холодильник</div>
<div class="t" style="left:493px;top:436.05px;font-size:11px;color:#333;font-weight:400;">ш</div>
<div class="a" style="left:8px;top:435px;width:1px;height:15px;background:#9a9a9a;"></div>
<div class="a" style="left:29px;top:464px;width:473px;height:1px;background:#d3c38a;"></div>
<div class="a" style="left:490px;top:450px;width:1px;height:14px;background:#d3c38a;"></div>
<div class="t" style="left:45px;top:451.05px;font-size:11px;color:#333;font-weight:400;">Духовой шкаф</div>
<div class="t" style="left:493px;top:451.05px;font-size:11px;color:#333;font-weight:400;">ш</div>
<div class="a" style="left:8px;top:450px;width:1px;height:15px;background:#9a9a9a;"></div>
<div class="a" style="left:29px;top:479px;width:473px;height:1px;background:#d3c38a;"></div>
<div class="a" style="left:490px;top:465px;width:1px;height:14px;background:#d3c38a;"></div>
<div class="t" style="left:45px;top:466.05px;font-size:11px;color:#333;font-weight:400;">Стол 2/30 600х800х500</div>
<div class="t" style="left:493px;top:466.05px;font-size:11px;color:#333;font-weight:400;">ш</div>
<div class="a" style="left:8px;top:465px;width:1px;height:15px;background:#9a9a9a;"></div>
</div>
<div class="a" style="left:622px;top:225px;width:101px;height:1px;background:#e8e2c6;"></div>
<div class="a" style="left:620px;top:191px;width:2px;height:37px;background:#f2c21a;"></div>
<div class="a" style="left:723px;top:191px;width:2px;height:37px;background:#f2c21a;"></div>
<div class="a" style="left:620px;top:226px;width:105px;height:2px;background:#f2c21a;"></div>
<svg class="a" style="left:995px;top:197px;" width="11" height="9" viewBox="995 197 11 9"><path d="M997.2 203.8 L1000.2 199.8 L1003.2 203.8 Z" fill="#c8c8c8"/></svg>
<div class="a" style="left:996px;top:213px;width:8px;height:458px;background:#d9d9d9;border-radius:4px;"></div>
<div class="a" style="left:996px;top:213px;width:8px;height:69px;background:#a3a3a3;border-radius:4px;"></div>
<svg class="a" style="left:995px;top:678px;" width="11" height="10" viewBox="995 678 11 10"><path d="M997.2 680.8 L1003.2 680.8 L1000.2 684.8 Z" fill="#505050"/></svg>
<svg class="a" style="left:16px;top:695px;" width="10" height="12" viewBox="16 695 10 12"><path d="M23 698 L19 701 L23 704 Z" fill="#c8c8c8"/></svg>
<div class="a" style="left:33px;top:697px;width:937px;height:8px;background:#d9d9d9;border-radius:5px;"></div>
<div class="a" style="left:33px;top:697px;width:825px;height:8px;background:#a3a3a3;border-radius:5px;"></div>
<svg class="a" style="left:977px;top:695px;" width="10" height="12" viewBox="977 695 10 12"><path d="M980.2 698 L984.2 701 L980.2 704 Z" fill="#505050"/></svg>
<div class="a" style="left:508px;top:228px;width:474px;height:459px;border:1px solid #9f9f9f;background:#fff;box-shadow:1px 1px 6px rgba(0,0,0,0.15);"></div>
<div class="t" style="left:521px;top:239.26px;font-size:18.5px;color:#111;font-weight:400;">Настройка поля: Выручка, р.</div>
<svg class="a" style="left:896px;top:242px;" width="8" height="15" viewBox="896 242 8 15"><circle cx="899.6" cy="245.2" r="1.4" fill="#7a7a7a"/><circle cx="899.6" cy="249.4" r="1.4" fill="#7a7a7a"/><circle cx="899.6" cy="253.5" r="1.4" fill="#7a7a7a"/></svg>
<svg class="a" style="left:924px;top:243px;" width="13" height="13" viewBox="924 243 13 13"><rect x="926.8" y="245.8" width="7.6" height="7.5" fill="none" stroke="#2a2a2a" stroke-width="1.25"/></svg>
<svg class="a" style="left:954px;top:242px;" width="14" height="14" viewBox="954 242 14 14"><path d="M956.3 244.3 L965.8 253.8 M965.8 244.3 L956.3 253.8" stroke="#2a2a2a" stroke-width="1.2"/></svg>
<div class="a" style="left:514px;top:264px;width:348px;height:83px;border:3px solid #cc0000;"></div>
<svg class="a" style="left:522px;top:276px;" width="16" height="13" viewBox="522 276 16 13"><path d="M524.6 279.4 L529.6 284.6 L534.6 279.4" fill="none" stroke="#0f9c48" stroke-width="1.5"/></svg>
<div class="t" style="left:542px;top:272.52px;font-size:16px;color:#0f9c48;font-weight:400;">Сортировка</div>
<svg class="a" style="left:531px;top:296px;" width="19" height="14" viewBox="531 296 19 14"><path d="M535.9 299 V305.5" stroke="#1c6bb0" stroke-width="2"/><path d="M533 304.6 L535.9 308.3 L538.8 304.6 Z" fill="#1c6bb0"/><path d="M541 298.5 H543 M541 301.5 H545 M541 304.5 H547 M541 307.5 H549" stroke="#777" stroke-width="1"/><path d="M541 307.5 H549" stroke="#333" stroke-width="1.1"/><path d="M541 304.5 H547" stroke="#555" stroke-width="1"/></svg>
<div class="t" style="left:553px;top:296.24px;font-size:13px;color:#333;font-weight:400;letter-spacing:-0.08px;">Сортировать по возрастанию</div>
<svg class="a" style="left:531px;top:323px;" width="19" height="14" viewBox="531 323 19 14"><path d="M535.9 325.8 V332.5" stroke="#a3adb5" stroke-width="2"/><path d="M533 331.6 L535.9 335.3 L538.8 331.6 Z" fill="#a3adb5"/><path d="M541 325.5 H549 M541 328.5 H547 M541 331.5 H545 M541 334.5 H543" stroke="#aaa" stroke-width="1"/></svg>
<div class="t" style="left:553px;top:323.24px;font-size:13px;color:#9c9c9c;font-weight:400;letter-spacing:-0.08px;">Сортировать по убыванию</div>
<svg class="a" style="left:522px;top:360px;" width="16" height="13" viewBox="522 360 16 13"><path d="M524.6 363.4 L529.6 368.6 L534.6 363.4" fill="none" stroke="#0f9c48" stroke-width="1.5"/></svg>
<div class="t" style="left:542px;top:356.52px;font-size:16px;color:#0f9c48;font-weight:400;letter-spacing:-0.38px;">Фильтр по значению</div>
<div class="a" style="left:531px;top:378px;width:60px;height:26px;border:1px solid #adadad;border-radius:3px;background:linear-gradient(#ffffff 0%,#ffffff 45%,#ededed 100%);box-shadow:0 1px 1px rgba(0,0,0,0.25);"></div>
<div class="a" style="left:561px;top:379px;width:1px;height:24px;background:#c8c8c8;"></div>
<svg class="a" style="left:537px;top:381px;" width="20" height="19" viewBox="537 381 20 19"><rect x="543.5" y="383.5" width="10" height="10" rx="1.3" fill="#fff" stroke="#4d6d8d" stroke-width="1"/><path d="M550 388 L553.5 384" stroke="#6cc04a" stroke-width="1.6"/><rect x="541.5" y="385.5" width="10" height="10" rx="1.3" fill="#fff" stroke="#4d6d8d" stroke-width="1"/><path d="M548 390 L551.5 386" stroke="#6cc04a" stroke-width="1.6"/><rect x="539.5" y="387.5" width="10" height="10" rx="1.3" fill="#fff" stroke="#4d6d8d" stroke-width="1"/><path d="M541.5 392.2 L544 394.8 L549.5 388.8" fill="none" stroke="#4cb030" stroke-width="2.3" stroke-linecap="round"/></svg>
<svg class="a" style="left:566px;top:381px;" width="20" height="19" viewBox="566 381 20 19"><rect x="572.7" y="383.5" width="10" height="10" rx="1.3" fill="#fff" stroke="#4d6d8d" stroke-width="1"/><rect x="570.7" y="385.5" width="10" height="10" rx="1.3" fill="#fff" stroke="#4d6d8d" stroke-width="1"/><rect x="568.7" y="387.5" width="10" height="10" rx="1.3" fill="#fff" stroke="#4d6d8d" stroke-width="1"/></svg>
<div class="a" style="left:632px;top:379px;width:260px;height:25px;border:1px solid #a3a3a3;border-radius:2px;background:#fff;"></div>
<div class="a" style="left:870px;top:380px;width:1px;height:23px;background:#b8b8b8;"></div>
<div class="t" style="left:635.5px;top:384.24px;font-size:13px;color:#c4c1cd;font-weight:400;letter-spacing:-0.2px;">Поиск (Ctrl+F)</div>
<svg class="a" style="left:875px;top:385px;" width="11" height="11" viewBox="875 385 11 11"><path d="M878 388.2 L883.1 393.3 M883.1 388.2 L878 393.3" stroke="#444" stroke-width="1.1"/></svg>
<div class="a" style="left:901px;top:378px;width:61px;height:26px;border:1px solid #adadad;border-radius:3px;background:linear-gradient(#ffffff 0%,#ffffff 45%,#ededed 100%);box-shadow:0 1px 1px rgba(0,0,0,0.25);"></div>
<div class="t" style="left:915px;top:384.24px;font-size:13px;color:#333;font-weight:400;">Еще</div>
<svg class="a" style="left:945px;top:388px;" width="13" height="9" viewBox="945 388 13 9"><path d="M948.5 390.7 L954.5 390.7 L951.5 393.90000000000003 Z" fill="#3f3f3f"/></svg>
<div class="a" style="left:531px;top:413px;width:431px;height:147px;border:1px solid #a3a3a3;background:#fff;"></div>
<div class="a" style="left:532px;top:414px;width:415px;height:29px;background:#f8f8f8;"></div>
<div class="a" style="left:541px;top:421px;width:15px;height:15px;border:1px solid #9c9c9c;border-radius:2px;background:#fff;"></div>
<svg class="a" style="left:541px;top:416px;" width="18" height="18" viewBox="541 416 18 18"><path d="M545 427 L548.3 430.6 L556 421.2" fill="none" stroke="#16a046" stroke-width="2.7" stroke-linecap="round" stroke-linejoin="round"/></svg>
<div class="t" style="left:574px;top:421.24px;font-size:13px;color:#333;font-weight:400;">554,00</div>
<div class="a" style="left:541px;top:450px;width:15px;height:15px;border:1px solid #9c9c9c;border-radius:2px;background:#fff;"></div>
<svg class="a" style="left:541px;top:445px;" width="18" height="18" viewBox="541 445 18 18"><path d="M545 456 L548.3 459.6 L556 450.2" fill="none" stroke="#16a046" stroke-width="2.7" stroke-linecap="round" stroke-linejoin="round"/></svg>
<div class="t" style="left:574px;top:450.24px;font-size:13px;color:#333;font-weight:400;">555,75</div>
<div class="a" style="left:532px;top:472px;width:415px;height:29px;background:#f8f8f8;"></div>
<div class="a" style="left:541px;top:479px;width:15px;height:15px;border:1px solid #9c9c9c;border-radius:2px;background:#fff;"></div>
<svg class="a" style="left:541px;top:474px;" width="18" height="18" viewBox="541 474 18 18"><path d="M545 485 L548.3 488.6 L556 479.2" fill="none" stroke="#16a046" stroke-width="2.7" stroke-linecap="round" stroke-linejoin="round"/></svg>
<div class="t" style="left:574px;top:479.24px;font-size:13px;color:#333;font-weight:400;">570,00</div>
<div class="a" style="left:541px;top:508px;width:15px;height:15px;border:1px solid #9c9c9c;border-radius:2px;background:#fff;"></div>
<svg class="a" style="left:541px;top:503px;" width="18" height="18" viewBox="541 503 18 18"><path d="M545 514 L548.3 517.6 L556 508.2" fill="none" stroke="#16a046" stroke-width="2.7" stroke-linecap="round" stroke-linejoin="round"/></svg>
<div class="t" style="left:574px;top:508.24px;font-size:13px;color:#333;font-weight:400;">645,75</div>
<div class="a" style="left:532px;top:530px;width:415px;height:29px;background:#f8f8f8;"></div>
<div class="a" style="left:541px;top:537px;width:15px;height:15px;border:1px solid #9c9c9c;border-radius:2px;background:#fff;"></div>
<svg class="a" style="left:541px;top:532px;" width="18" height="18" viewBox="541 532 18 18"><path d="M545 543 L548.3 546.6 L556 537.2" fill="none" stroke="#16a046" stroke-width="2.7" stroke-linecap="round" stroke-linejoin="round"/></svg>
<div class="t" style="left:574px;top:537.24px;font-size:13px;color:#333;font-weight:400;">722,00</div>
<svg class="a" style="left:948px;top:419px;" width="12" height="11" viewBox="948 419 12 11"><path d="M951 427 L954 422.6 L957 427 Z" fill="#444"/></svg>
<div class="a" style="left:950px;top:437px;width:8px;height:99px;background:#d9d9d9;border-radius:4px;"></div>
<svg class="a" style="left:948px;top:443px;" width="12" height="12" viewBox="948 443 12 12"><circle cx="954" cy="449" r="4" fill="#a3a3a3"/></svg>
<svg class="a" style="left:948px;top:541px;" width="12" height="11" viewBox="948 541 12 11"><path d="M951 545 L957 545 L954 549.4 Z" fill="#444"/></svg>
<div class="t" style="left:531px;top:579.24px;font-size:13px;color:#333;font-weight:400;">Выведено 297 первых значений.</div>
<div class="t" style="left:739px;top:579.24px;font-size:13px;color:#2656b0;font-weight:400;text-decoration:underline;text-decoration-skip-ink:none;">Вывести все</div>
<svg class="a" style="left:821px;top:580px;" width="10" height="13" viewBox="821 580 10 13"><path d="M823.5 583.9 Q823.9 581.8 826.0 581.8 Q828.4 581.9 828.3000000000001 584 Q828.2 585.4 826.9 586.3 Q825.9 587.1 825.9 588.7" fill="none" stroke="#1a78c2" stroke-width="1.35" stroke-linecap="round"/><rect x="825.225" y="590" width="1.35" height="1.5" fill="#1a78c2"/></svg>
<svg class="a" style="left:523px;top:612px;" width="15" height="18" viewBox="523 612 15 18"><path d="M526.8 616 L532.4 621 L526.8 626" fill="none" stroke="#0f9c48" stroke-width="1.5"/></svg>
<div class="t" style="left:542px;top:612.52px;font-size:16px;color:#0f9c48;font-weight:400;letter-spacing:-0.43px;">Фильтр по условию</div>
<div class="t" style="left:522px;top:648.52px;font-size:16px;color:#0f9c48;font-weight:400;text-decoration:underline;text-decoration-skip-ink:none;text-underline-offset:2px;letter-spacing:-0.7px;">Еще</div>
<div class="a" style="left:564px;top:647px;width:214px;height:26px;border:1px solid #c6a500;border-radius:3px;background:linear-gradient(#ffe94a 0%,#ffdf1a 45%,#f2cf00 100%);box-shadow:0 1px 1px rgba(0,0,0,0.3);"></div>
<div class="t" style="left:578px;top:653.24px;font-size:13px;color:#333;font-weight:700;">Применить и сформировать</div>
<div class="a" style="left:787px;top:647px;width:93px;height:26px;border:1px solid #adadad;border-radius:3px;background:linear-gradient(#ffffff 0%,#ffffff 45%,#ededed 100%);box-shadow:0 1px 1px rgba(0,0,0,0.25);"></div>
<div class="t" style="left:800px;top:653.24px;font-size:13px;color:#333;font-weight:400;letter-spacing:-0.22px;">Применить</div>
<div class="a" style="left:889px;top:647px;width:73px;height:26px;border:1px solid #adadad;border-radius:3px;background:linear-gradient(#ffffff 0%,#ffffff 45%,#ededed 100%);box-shadow:0 1px 1px rgba(0,0,0,0.25);"></div>
<div class="t" style="left:902.5px;top:653.24px;font-size:13px;color:#333;font-weight:400;letter-spacing:-0.3px;">Отмена</div>
</body></html>
